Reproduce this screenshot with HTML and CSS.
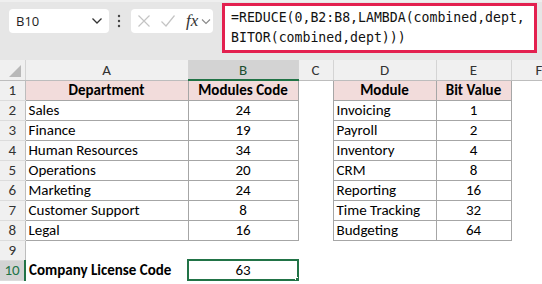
FILE: index.html
```html
<!DOCTYPE html>
<html lang="en">
<head>
    <meta charset="UTF-8">
    <meta name="viewport" content="width=device-width, initial-scale=1.0">
    <title>Company License Code</title>
    <link rel="stylesheet" href="styles.css">
</head>
<body>
    <div class="toolbar">
        <div class="namebox">
            <span>B10</span>
            <svg width="12" height="8" viewBox="0 0 12 8"><path d="M1.5 1.5 L6 6 L10.5 1.5" fill="none" stroke="#333" stroke-width="1.3"/></svg>
        </div>
        <div class="dots">
            <svg width="4" height="14" viewBox="0 0 4 14"><circle cx="2" cy="2" r="1.2" fill="#444"/><circle cx="2" cy="7" r="1.2" fill="#444"/><circle cx="2" cy="12" r="1.2" fill="#444"/></svg>
        </div>
        <div class="fxbox">
            <svg width="14" height="14" viewBox="0 0 14 14"><path d="M1.5 1.5 L12.5 12.5 M12.5 1.5 L1.5 12.5" stroke="#c4c4c4" stroke-width="1.2"/></svg>
            <svg width="16" height="14" viewBox="0 0 16 14"><path d="M1.5 7.5 L6 12 L14.5 1.5" fill="none" stroke="#c4c4c4" stroke-width="1.2"/></svg>
            <span class="fx">fx</span>
            <svg width="10" height="7" viewBox="0 0 10 7"><path d="M1 1.5 L5 5.5 L9 1.5" fill="none" stroke="#888" stroke-width="1.1"/></svg>
        </div>
        <div class="formula">=REDUCE(0,B2:B8,LAMBDA(combined,dept,<br>BITOR(combined,dept)))</div>
    </div>

    <table class="sheet">
        <colgroup>
            <col class="c-row"><col class="c-a"><col class="c-b"><col class="c-c"><col class="c-d"><col class="c-e"><col class="c-f">
        </colgroup>
        <tr class="colhead">
            <th class="corner"><span class="tri"></span></th>
            <th>A</th><th class="sel">B</th><th>C</th><th>D</th><th>E</th><th>F</th>
        </tr>
        <tr>
            <th class="rh">1</th>
            <td class="b head">Department</td><td class="b head">Modules Code</td><td></td>
            <td class="b head">Module</td><td class="b head">Bit Value</td><td></td>
        </tr>
        <tr>
            <th class="rh">2</th>
            <td class="b">Sales</td><td class="b num">24</td><td></td>
            <td class="b">Invoicing</td><td class="b num">1</td><td></td>
        </tr>
        <tr>
            <th class="rh">3</th>
            <td class="b">Finance</td><td class="b num">19</td><td></td>
            <td class="b">Payroll</td><td class="b num">2</td><td></td>
        </tr>
        <tr>
            <th class="rh">4</th>
            <td class="b">Human Resources</td><td class="b num">34</td><td></td>
            <td class="b">Inventory</td><td class="b num">4</td><td></td>
        </tr>
        <tr>
            <th class="rh">5</th>
            <td class="b">Operations</td><td class="b num">20</td><td></td>
            <td class="b">CRM</td><td class="b num">8</td><td></td>
        </tr>
        <tr>
            <th class="rh">6</th>
            <td class="b">Marketing</td><td class="b num">24</td><td></td>
            <td class="b">Reporting</td><td class="b num">16</td><td></td>
        </tr>
        <tr>
            <th class="rh">7</th>
            <td class="b">Customer Support</td><td class="b num">8</td><td></td>
            <td class="b">Time Tracking</td><td class="b num">32</td><td></td>
        </tr>
        <tr>
            <th class="rh">8</th>
            <td class="b">Legal</td><td class="b num">16</td><td></td>
            <td class="b">Budgeting</td><td class="b num">64</td><td></td>
        </tr>
        <tr>
            <th class="rh">9</th>
            <td></td><td></td><td></td><td></td><td></td><td></td>
        </tr>
        <tr>
            <th class="rh active">10</th>
            <td class="bold">Company License Code</td><td class="num selected">63</td><td></td>
            <td></td><td></td><td></td>
        </tr>
    </table>
</body>
</html>
```

FILE: styles.css
```css
body {
    margin: 0;
    width: 542px;
    height: 284px;
    background-color: #ffffff;
    font-family: Carlito, Lato, "Liberation Sans", sans-serif;
    overflow: hidden;
}
.toolbar {
    display: flex;
    align-items: flex-start;
    height: 60px;
    background-color: #e6e6e6;
    border-top: 2px solid #efefef;
    box-sizing: border-box;
}
.namebox {
    display: flex;
    align-items: center;
    justify-content: space-between;
    margin: 7px 0 0 9px;
    width: 100px;
    height: 24px;
    padding: 0 6px 0 7px;
    box-sizing: border-box;
    background-color: #ffffff;
    border-radius: 4px;
    font-family: "Open Sans", "Noto Sans", sans-serif;
    font-size: 13px;
    color: #222;
}
.dots {
    display: flex;
    justify-content: center;
    width: 20px;
    margin-top: 12px;
}
.fxbox {
    display: flex;
    align-items: center;
    gap: 9px;
    margin: 7px 0 0 2px;
    width: 82px;
    height: 24px;
    padding: 0 0 0 6px;
    box-sizing: border-box;
    background-color: #ffffff;
    border-radius: 4px;
}
.fx {
    font-family: "Liberation Serif", serif;
    font-style: italic;
    font-size: 17px;
    color: #333;
    margin-left: 1px;
    margin-right: -6px;
}
.formula {
    margin: 1px 0 0 9px;
    width: 315px;
    height: 50px;
    box-sizing: border-box;
    border: 3px solid #e3204f;
    background-color: #ffffff;
    padding: 2px 0 0 6px;
    font-family: "DejaVu Sans Mono", "Liberation Mono", monospace;
    font-size: 13.2px;
    line-height: 20px;
    color: #111;
    white-space: nowrap;
}
.sheet {
    border-collapse: collapse;
    table-layout: fixed;
    width: 567px;
    font-size: 15px;
    color: #000;
}
.c-row { width: 25px; }
.c-a { width: 163px; }
.c-b { width: 110px; }
.c-c { width: 35px; }
.c-d { width: 103px; }
.c-e { width: 75px; }
.c-f { width: 56px; }
.sheet tr {
    height: 20px;
}
.sheet td,
.sheet th {
    padding: 0 3px;
    height: 20px;
    box-sizing: border-box;
    white-space: nowrap;
    overflow: hidden;
}
.colhead th {
    background-color: #f0f0f0;
    border-right: 1px solid #d4d4d4;
    border-bottom: 1px solid #bdbdbd;
    font-weight: normal;
    color: #333;
}
.colhead th.sel {
    background-color: #d3d3d3;
    border-bottom: 2px solid #217346;
    color: #1d4f31;
}
.corner {
    position: relative;
}
.tri {
    position: absolute;
    right: 4px;
    bottom: 3px;
    width: 0;
    height: 0;
    border-left: 12px solid transparent;
    border-bottom: 12px solid #b8b8b8;
}
.rh {
    background-color: #f0f0f0;
    border-right: 1px solid #bdbdbd;
    border-bottom: 1px solid #dcdcdc;
    font-weight: normal;
    color: #333;
    text-align: center;
}
.rh.active {
    background-color: #d3d3d3;
    border-right: 2px solid #217346;
    color: #217346;
}
.b {
    border: 1px solid #a6a6a6;
}
.head {
    background-color: #f2dcdb;
    font-weight: bold;
    text-align: center;
}
.num {
    text-align: center;
}
.bold {
    font-weight: bold;
}
.selected {
    position: relative;
    outline: 2px solid #217346;
    outline-offset: -1px;
}
.selected::after {
    content: "";
    position: absolute;
    right: -3px;
    bottom: -3px;
    width: 5px;
    height: 5px;
    background-color: #217346;
    border-left: 1px solid #fff;
    border-top: 1px solid #fff;
}
```
